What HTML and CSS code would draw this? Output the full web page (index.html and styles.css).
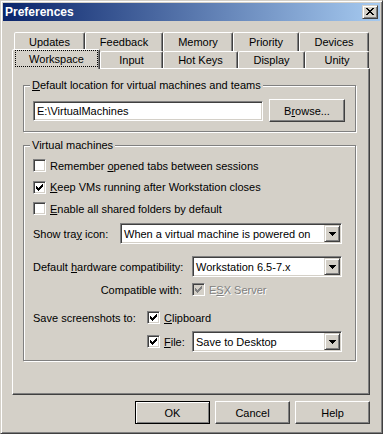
FILE: index.html
```html
<!DOCTYPE html>
<html lang="en">

<head>
    <meta charset="UTF-8">
    <title>Preferences</title>
    <link rel="stylesheet" href="styles.css">
</head>

<body>
    <div class="window">
        <!-- 标题栏 -->
        <div class="titlebar">
            <span class="title">Preferences</span>
            <button class="close">
                <svg width="8" height="7" viewBox="0 0 8 7">
                    <path d="M0 0h2v1H0z M6 0h2v1H6z M1 1h2v1H1z M5 1h2v1H5z M2 2h4v1H2z M3 3h2v1H3z M2 4h4v1H2z M1 5h2v1H1z M5 5h2v1H5z M0 6h2v1H0z M6 6h2v1H6z" fill="#000" />
                </svg>
            </button>
        </div>

        <div class="dialog">
            <!-- 两行标签页 -->
            <div class="tabs">
                <div class="tab-row back">
                    <div class="tab">Updates</div>
                    <div class="tab">Feedback</div>
                    <div class="tab">Memory</div>
                    <div class="tab">Priority</div>
                    <div class="tab">Devices</div>
                </div>
                <div class="tab-row front">
                    <div class="tab selected"><span class="focus">Workspace</span></div>
                    <div class="tab">Input</div>
                    <div class="tab">Hot Keys</div>
                    <div class="tab">Display</div>
                    <div class="tab">Unity</div>
                </div>
            </div>

            <div class="panel">
                <fieldset class="group group-location">
                    <legend><u>D</u>efault location for virtual machines and teams</legend>
                    <div class="location-row">
                        <div class="edit">E:\VirtualMachines</div>
                        <button class="btn browse">B<u>r</u>owse...</button>
                    </div>
                </fieldset>

                <fieldset class="group group-vm">
                    <legend>Virtual machines</legend>
                    <div class="check-list">
                        <div class="check">
                            <span class="box"></span>
                            <span>Remember <u>o</u>pened tabs between sessions</span>
                        </div>
                        <div class="check">
                            <span class="box">
                                <svg width="7" height="7" viewBox="0 0 7 7"><path d="M0 2h1v3H0z M1 3h1v3H1z M2 4h1v3H2z M3 3h1v3H3z M4 2h1v3H4z M5 1h1v3H5z M6 0h1v3H6z" fill="#000" /></svg>
                            </span>
                            <span><u>K</u>eep VMs running after Workstation closes</span>
                        </div>
                        <div class="check">
                            <span class="box"></span>
                            <span><u>E</u>nable all shared folders by default</span>
                        </div>
                    </div>

                    <div class="form-row tray-row">
                        <span>Show tra<u>y</u> icon:</span>
                        <div class="combo wide">
                            <span class="combo-text">When a virtual machine is powered on</span>
                            <span class="drop">
                                <svg width="7" height="4" viewBox="0 0 7 4"><path d="M0 0h7v1H0z M1 1h5v1H1z M2 2h3v1H2z M3 3h1v1H3z" fill="#000" /></svg>
                            </span>
                        </div>
                    </div>

                    <div class="form-row hw-row">
                        <span>Default <u>h</u>ardware compatibility:</span>
                        <div class="combo">
                            <span class="combo-text">Workstation 6.5-7.x</span>
                            <span class="drop">
                                <svg width="7" height="4" viewBox="0 0 7 4"><path d="M0 0h7v1H0z M1 1h5v1H1z M2 2h3v1H2z M3 3h1v1H3z" fill="#000" /></svg>
                            </span>
                        </div>
                    </div>

                    <div class="check compat-row">
                        <span class="compat-label">Compatible with:</span>
                        <span class="box disabled">
                            <svg width="7" height="7" viewBox="0 0 7 7"><path d="M0 2h1v3H0z M1 3h1v3H1z M2 4h1v3H2z M3 3h1v3H3z M4 2h1v3H4z M5 1h1v3H5z M6 0h1v3H6z" fill="#808080" /></svg>
                        </span>
                        <span class="grayed">E<u>S</u>X Server</span>
                    </div>

                    <div class="check save-row">
                        <span class="save-label">Save screenshots to:</span>
                        <span class="box">
                            <svg width="7" height="7" viewBox="0 0 7 7"><path d="M0 2h1v3H0z M1 3h1v3H1z M2 4h1v3H2z M3 3h1v3H3z M4 2h1v3H4z M5 1h1v3H5z M6 0h1v3H6z" fill="#000" /></svg>
                        </span>
                        <span><u>C</u>lipboard</span>
                    </div>

                    <div class="form-row file-row">
                        <span class="box">
                            <svg width="7" height="7" viewBox="0 0 7 7"><path d="M0 2h1v3H0z M1 3h1v3H1z M2 4h1v3H2z M3 3h1v3H3z M4 2h1v3H4z M5 1h1v3H5z M6 0h1v3H6z" fill="#000" /></svg>
                        </span>
                        <span class="file-label"><u>F</u>ile:</span>
                        <div class="combo">
                            <span class="combo-text">Save to Desktop</span>
                            <span class="drop">
                                <svg width="7" height="4" viewBox="0 0 7 4"><path d="M0 0h7v1H0z M1 1h5v1H1z M2 2h3v1H2z M3 3h1v1H3z" fill="#000" /></svg>
                            </span>
                        </div>
                    </div>
                </fieldset>
            </div>

            <!-- 底部按钮 -->
            <div class="buttons">
                <button class="btn default">OK</button>
                <button class="btn">Cancel</button>
                <button class="btn">Help</button>
            </div>
        </div>
    </div>
</body>

</html>
```

FILE: styles.css
```css
* {
    margin: 0;
    padding: 0;
    box-sizing: border-box;
}

body {
    background: #d4d0c8;
    font: 11px "Liberation Sans", Arial, sans-serif;
    color: #000;
}

button {
    font: inherit;
    color: inherit;
}

/* 窗口外框 */
.window {
    width: 383px;
    height: 434px;
    padding: 2px;
    border: 1px solid;
    border-color: #d4d0c8 #404040 #404040 #d4d0c8;
    box-shadow: inset 1px 1px #fff, inset -1px -1px #808080;
    background: #d4d0c8;
    display: flex;
    flex-direction: column;
}

.titlebar {
    height: 18px;
    padding: 0 2px;
    display: flex;
    align-items: center;
    background: linear-gradient(to right, #0a246a, #a6caf0);
}

.title {
    flex: 1;
    color: #fff;
    font-weight: bold;
    font-size: 12px;
}

.close {
    width: 16px;
    height: 14px;
    padding-bottom: 1px;
    border: 1px solid;
    border-color: #d4d0c8 #404040 #404040 #d4d0c8;
    box-shadow: inset 1px 1px #fff, inset -1px -1px #808080;
    background: #d4d0c8;
    display: flex;
    align-items: center;
    justify-content: center;
}

.dialog {
    flex: 1;
    padding: 11px 10px 0 9px;
    display: flex;
    flex-direction: column;
}

/* 标签页 */
.tab-row {
    display: grid;
    margin: 0 1px 0 2px;
}

.tab-row.back {
    height: 19px;
    grid-template-columns: 71px 78px 70px 66px 70px;
}

.tab-row.front {
    height: 17px;
    grid-template-columns: 86px 63px 75px 67px 64px;
}

.tab {
    border: 1px solid;
    border-bottom: 0;
    border-color: #fff #404040 transparent #fff;
    border-radius: 2px 2px 0 0;
    box-shadow: inset -1px 0 #808080;
    background: #d4d0c8;
    display: flex;
    align-items: center;
    justify-content: center;
}

.tab.selected {
    margin: -2px 0 -1px -2px;
    padding: 0 1px 2px 2px;
    position: relative;
    z-index: 1;
    align-items: stretch;
}

.focus {
    flex: 1;
    border: 1px dotted #000;
    display: flex;
    align-items: center;
    justify-content: center;
}

.panel {
    height: 327px;
    padding: 10px 13px 0 10px;
    border: 1px solid;
    border-color: #fff #404040 #404040 #fff;
    box-shadow: inset -1px -1px #808080;
}

/* 分组框 */
.group {
    min-width: 0;
    border: 1px solid #808080;
    box-shadow: inset 1px 1px #fff, 1px 1px #fff;
}

.group legend {
    margin-left: -3px;
    padding: 0 2px;
    line-height: 13px;
    background: #d4d0c8;
}

.group-location {
    padding: 7px 10px 9px 9px;
}

.group-vm {
    margin-top: 7px;
    padding: 7px 13px 8px 9px;
}

.location-row {
    display: flex;
    align-items: center;
    gap: 6px;
}

.edit {
    flex: 1;
    height: 20px;
    padding-left: 3px;
    border: 1px solid;
    border-color: #808080 #fff #fff #808080;
    box-shadow: inset 1px 1px #404040, inset -1px -1px #d4d0c8;
    background: #fff;
    display: flex;
    align-items: center;
}

.btn {
    width: 75px;
    height: 23px;
    border: 1px solid;
    border-color: #fff #404040 #404040 #fff;
    box-shadow: inset -1px -1px #808080;
    background: #d4d0c8;
    display: flex;
    align-items: center;
    justify-content: center;
}

.btn.browse {
    width: 76px;
}

.btn.default {
    border-color: #000;
    box-shadow: inset 1px 1px #fff, inset -1px -1px #808080;
}

/* 复选框 */
.check-list {
    display: flex;
    flex-direction: column;
    gap: 8.5px;
}

.check {
    height: 13px;
    display: flex;
    align-items: center;
    gap: 4px;
}

.box {
    flex: none;
    width: 13px;
    height: 13px;
    border: 1px solid;
    border-color: #808080 #fff #fff #808080;
    box-shadow: inset 1px 1px #404040, inset -1px -1px #d4d0c8;
    background: #fff;
    display: flex;
    align-items: center;
    justify-content: center;
}

.box.disabled {
    background: #d4d0c8;
}

.grayed {
    color: #808080;
    text-shadow: 1px 1px #fff;
}

/* 下拉框 */
.form-row {
    height: 21px;
    display: flex;
    align-items: center;
}

.combo {
    width: 150px;
    height: 21px;
    margin-left: auto;
    padding: 1px;
    border: 1px solid;
    border-color: #808080 #fff #fff #808080;
    box-shadow: inset 1px 1px #404040, inset -1px -1px #d4d0c8;
    background: #fff;
    display: flex;
    align-items: center;
}

.combo.wide {
    width: 222px;
}

.combo-text {
    flex: 1;
    padding-left: 2px;
}

.drop {
    width: 16px;
    align-self: stretch;
    border: 1px solid;
    border-color: #d4d0c8 #404040 #404040 #d4d0c8;
    box-shadow: inset 1px 1px #fff, inset -1px -1px #808080;
    background: #d4d0c8;
    display: flex;
    align-items: center;
    justify-content: center;
}

.tray-row {
    margin-top: 8px;
}

.hw-row {
    margin-top: 12px;
}

.compat-row {
    margin-top: 6px;
}

.compat-label {
    width: 149px;
    margin-right: 6px;
    text-align: right;
}

.save-row {
    margin-top: 15px;
}

.save-label {
    width: 110px;
}

.file-row {
    margin-top: 7px;
}

.file-row .box {
    margin-left: 114px;
}

.file-label {
    margin-left: 4px;
}

.buttons {
    margin-top: 6px;
    display: flex;
    justify-content: flex-end;
    gap: 5px;
}
```
